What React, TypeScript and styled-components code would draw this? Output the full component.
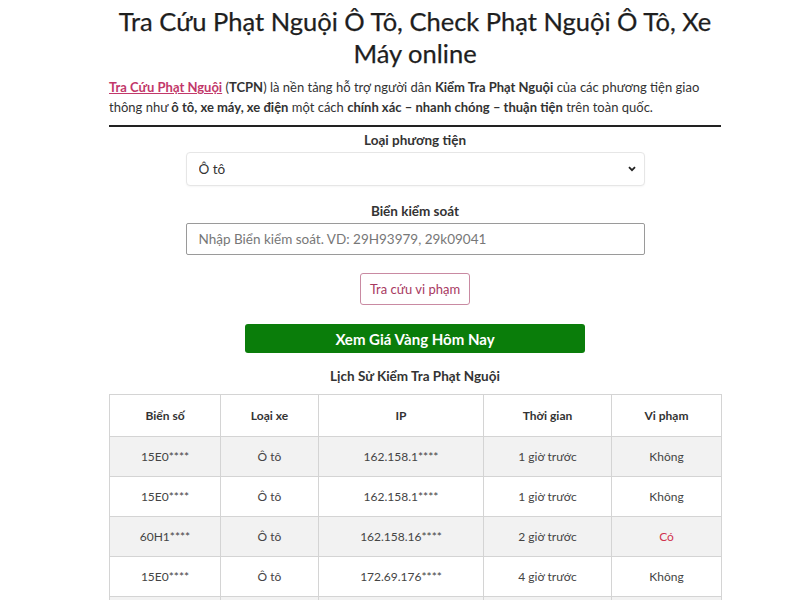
import React from "react";
import styled, { createGlobalStyle } from "styled-components";

const Global = createGlobalStyle`
  html, body { margin: 0; padding: 0; background: #fff; }
  body { font-family: Lato, "Open Sans", sans-serif; color: #333; }
  * { box-sizing: border-box; }
`;

const Main = styled.main`
  width: 612px;
  margin-left: 109px;
  display: flex;
  flex-direction: column;
`;

const Title = styled.h1`
  margin: 5px 0 0;
  font-size: 25.5px;
  line-height: 32px;
  font-weight: 400;
  color: #1e1e1e;
  text-align: center;
  -webkit-text-stroke: 0.25px #1e1e1e;
`;

const Intro = styled.p`
  margin: 8px 0 8px;
  font-size: 13px;
  line-height: 20px;
  color: #333;
`;

const Link = styled.a`
  color: #c2386a;
  font-weight: 700;
  text-decoration: underline;
`;

const Rule = styled.hr`
  margin: 0;
  border: 0;
  border-top: 2px solid #222;
`;

const Form = styled.form`
  display: flex;
  flex-direction: column;
  align-items: center;
`;

const Label = styled.label<{ $top: number }>`
  margin-top: ${(p) => p.$top}px;
  font-size: 13.5px;
  line-height: 18px;
  font-weight: 700;
  color: #333;
`;

const SelectWrap = styled.div`
  position: relative;
  width: 459px;
  margin-top: 3px;
`;

const Select = styled.select`
  width: 100%;
  height: 34px;
  appearance: none;
  border: 1px solid #e6e6e6;
  border-radius: 4px;
  box-shadow: 0 1px 2px rgba(0,0,0,0.04);
  background: #fff;
  padding: 0 12px;
  font-family: inherit;
  font-size: 13.5px;
  color: #333;
`;

const Chevron = styled.svg`
  position: absolute;
  right: 9px;
  top: 14px;
  pointer-events: none;
`;

const Input = styled.input`
  width: 459px;
  height: 32px;
  margin-top: 3px;
  border: 1px solid #9a9a9a;
  border-radius: 2px;
  padding: 0 12px;
  font-family: inherit;
  font-size: 13.5px;
  color: #333;
  &::placeholder { color: #777; }
`;

const OutlineButton = styled.button`
  margin-top: 18px;
  width: 110px;
  height: 32px;
  border: 1px solid #c98aa2;
  border-radius: 3px;
  background: #fff;
  color: #a8395f;
  font-family: inherit;
  font-size: 13px;
`;

const GreenButton = styled.a`
  margin-top: 19px;
  width: 340px;
  height: 29px;
  display: flex;
  align-items: center;
  justify-content: center;
  background: #0a7d0a;
  border-radius: 3px;
  color: #fff;
  font-weight: 700;
  font-size: 15px;
  text-decoration: none;
`;

const SectionHeading = styled.h2`
  margin: 14px 0 9px;
  font-size: 13.5px;
  line-height: 18px;
  font-weight: 700;
  color: #333;
  text-align: center;
`;

const Table = styled.table`
  width: 612px;
  border-collapse: collapse;
  table-layout: fixed;
  font-size: 12px;
  color: #444;
`;

const Th = styled.th<{ $w: number }>`
  width: ${(p) => p.$w}px;
  height: 42px;
  border: 1px solid #d4d4d4;
  font-weight: 700;
  color: #333;
  text-align: center;
`;

const Tr = styled.tr<{ $striped: boolean }>`
  background: ${(p) => (p.$striped ? "#f2f2f2" : "#fff")};
`;

const Td = styled.td<{ $alert?: boolean }>`
  height: 40px;
  border: 1px solid #d4d4d4;
  text-align: center;
  color: ${(p) => (p.$alert ? "#d0324f" : "#444")};
`;

const cols = [
  { name: "Biển số", w: 111 },
  { name: "Loại xe", w: 98 },
  { name: "IP", w: 165 },
  { name: "Thời gian", w: 128 },
  { name: "Vi phạm", w: 110 },
];

const rows = [
  ["15E0****", "Ô tô", "162.158.1****", "1 giờ trước", "Không"],
  ["15E0****", "Ô tô", "162.158.1****", "1 giờ trước", "Không"],
  ["60H1****", "Ô tô", "162.158.16****", "2 giờ trước", "Có"],
  ["15E0****", "Ô tô", "172.69.176****", "4 giờ trước", "Không"],
  ["15E0****", "Ô tô", "172.69.176****", "4 giờ trước", "Không"],
];

export default function App() {
  return (
    <>
      <Global />
      <Main>
        <Title>Tra Cứu Phạt Nguội Ô Tô, Check Phạt Nguội Ô Tô, Xe Máy online</Title>
        <Intro>
          <Link href="#">Tra Cứu Phạt Nguội</Link> (<b>TCPN</b>) là nền tảng hỗ trợ người dân{" "}
          <b>Kiểm Tra Phạt Nguội</b> của các phương tiện giao thông như <b>ô tô, xe máy, xe điện</b>{" "}
          một cách <b>chính xác – nhanh chóng – thuận tiện</b> trên toàn quốc.
        </Intro>
        <Rule />
        <Form onSubmit={(e) => e.preventDefault()}>
          <Label $top={4}>Loại phương tiện</Label>
          <SelectWrap>
            <Select defaultValue="oto">
              <option value="oto">Ô tô</option>
              <option value="xemay">Xe máy</option>
              <option value="xedien">Xe điện</option>
            </Select>
            <Chevron width="8" height="6" viewBox="0 0 8 6">
              <path d="M1 1.2 L4 4.2 L7 1.2" fill="none" stroke="#222" strokeWidth="1.8" />
            </Chevron>
          </SelectWrap>
          <Label $top={16}>Biển kiểm soát</Label>
          <Input placeholder="Nhập Biển kiểm soát. VD: 29H93979, 29k09041" />
          <OutlineButton type="submit">Tra cứu vi phạm</OutlineButton>
          <GreenButton href="#">Xem Giá Vàng Hôm Nay</GreenButton>
        </Form>
        <SectionHeading>Lịch Sử Kiểm Tra Phạt Nguội</SectionHeading>
        <Table>
          <thead>
            <tr>
              {cols.map((c) => (
                <Th key={c.name} $w={c.w}>{c.name}</Th>
              ))}
            </tr>
          </thead>
          <tbody>
            {rows.map((r, i) => (
              <Tr key={i} $striped={i % 2 === 0}>
                {r.map((cell, j) => (
                  <Td key={j} $alert={j === 4 && cell === "Có"}>{cell}</Td>
                ))}
              </Tr>
            ))}
          </tbody>
        </Table>
      </Main>
    </>
  );
}
